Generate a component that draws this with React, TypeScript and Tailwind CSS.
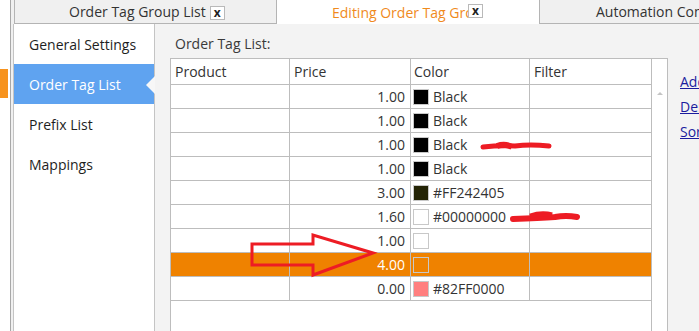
import React from "react";

type Row = { price: string; swatch: string; label: string; selected?: boolean };

const rows: Row[] = [
  { price: "1.00", swatch: "#000000", label: "Black" },
  { price: "1.00", swatch: "#000000", label: "Black" },
  { price: "1.00", swatch: "#000000", label: "Black" },
  { price: "1.00", swatch: "#000000", label: "Black" },
  { price: "3.00", swatch: "#242405", label: "#FF242405" },
  { price: "1.60", swatch: "#ffffff", label: "#00000000" },
  { price: "1.00", swatch: "#ffffff", label: "" },
  { price: "4.00", swatch: "transparent", label: "", selected: true },
  { price: "0.00", swatch: "#ff7f7f", label: "#82FF0000" },
];

const navItems = ["General Settings", "Order Tag List", "Prefix List", "Mappings"];

const CloseBox = ({ className = "" }: { className?: string }) => (
  <span
    className={`flex h-[14px] w-[15px] shrink-0 items-center justify-center border border-[#b9b9b9] bg-white pb-[1px] text-[12px] font-bold leading-none text-[#222] ${className}`}
  >
    x
  </span>
);

const Annotations = () => (
  <svg
    className="pointer-events-none absolute left-0 top-0"
    width="699"
    height="331"
    viewBox="0 0 699 331"
  >
    <path
      d="M483 147 Q500 145 515 146 Q530 144 549 146"
      stroke="#ed1c24"
      strokeWidth="5"
      strokeLinecap="round"
      fill="none"
    />
    <path d="M497 146 Q505 143 512 147" stroke="#ed1c24" strokeWidth="6" fill="none" />
    <path
      d="M513 219 Q540 218 555 217 Q566 215 577 217"
      stroke="#ed1c24"
      strokeWidth="6"
      strokeLinecap="round"
      fill="none"
    />
    <path d="M530 216 Q542 212 552 215" stroke="#ed1c24" strokeWidth="5" fill="none" />
    <path
      d="M252 244 L313 244 L313 235 L373 253 L313 275 L313 265 L252 265 Z"
      stroke="#ed1c24"
      strokeWidth="3"
      strokeLinejoin="miter"
      fill="none"
    />
  </svg>
);

const App = () => {
  return (
    <div
      className="relative flex h-[331px] w-[699px] overflow-hidden bg-white text-[14px] text-[#333]"
      style={{ fontFamily: '"Open Sans", "Noto Sans", sans-serif' }}
    >
      {/* far left strip */}
      <div className="flex w-[11px] shrink-0 flex-col border-r border-[#a8a8a8] bg-white">
        <div className="h-[69px]" />
        <div className="h-[29px] w-[8px] bg-[#f7931e]" />
      </div>

      <div className="flex min-w-0 flex-1 flex-col bg-[#f0f0f0]">
        {/* tabs */}
        <div className="flex h-[24px] shrink-0">
          <div className="w-[3px] shrink-0" />
          <div className="flex w-[263px] shrink-0 items-center border-x border-b border-[#b4b4b4] bg-[#f0f0f0] pl-[54px]">
            <span className="text-[#333]">Order Tag Group List</span>
            <CloseBox className="ml-[4px] mt-[3px]" />
          </div>
          <div className="flex w-[262px] shrink-0 items-start bg-white pl-[55px]">
            <span className="mt-[2px] w-[136px] overflow-hidden whitespace-nowrap text-[#f08a1c]">
              Editing Order Tag Group
            </span>
            <CloseBox className="mt-[4px]" />
          </div>
          <div className="flex min-w-0 flex-1 items-center overflow-hidden whitespace-nowrap border-b border-l border-[#b4b4b4] bg-[#f0f0f0] pl-[56px]">
            Automation Commands
          </div>
        </div>

        {/* body */}
        <div className="flex min-h-0 flex-1 pl-[2px]">
          <div className="flex w-[142px] shrink-0 flex-col border-x border-[#c4c4c4] bg-white">
            {navItems.map((item, i) => (
              <div
                key={item}
                className={`relative flex h-[40px] items-center pl-[15px] ${
                  i === 1 ? "bg-[#5fa3f0] text-white" : "text-[#1e1e1e]"
                }`}
              >
                {item}
                {i === 1 && (
                  <span className="absolute right-[-1px] top-[12px] h-0 w-0 border-y-[9px] border-r-[9px] border-y-transparent border-r-[#f7f7f7]" />
                )}
              </div>
            ))}
          </div>

          <div className="flex min-w-0 flex-1 flex-col bg-[#f3f3f3] pl-[15px] pt-[10px]">
            <div className="h-[20px] pl-[5px] leading-[20px] text-[#3a3a3a]">Order Tag List:</div>
            <div className="mt-[4px] flex min-h-0 flex-1">
              <div className="flex w-[498px] shrink-0 border-x border-t border-[#bdbdbd] bg-white">
                <div className="w-[480px] shrink-0">
                  <div className="grid h-[26px] grid-cols-[119px_121px_119px_121px] border-b border-[#bdbdbd]">
                    <div className="border-r border-[#bdbdbd] pl-[4px] leading-[25px]">Product</div>
                    <div className="border-r border-[#bdbdbd] pl-[4px] leading-[25px]">Price</div>
                    <div className="border-r border-[#bdbdbd] pl-[3px] leading-[25px]">Color</div>
                    <div className="pl-[4px] leading-[25px]">Filter</div>
                  </div>
                  {rows.map((r, i) => (
                    <div
                      key={i}
                      className={`grid h-[24px] grid-cols-[119px_121px_119px_121px] border-b border-[#bdbdbd] ${
                        r.selected ? "bg-[#ef8200] text-white" : ""
                      }`}
                    >
                      <div className="border-r border-[#bdbdbd]" />
                      <div className="border-r border-[#bdbdbd] pr-[5px] text-right leading-[23px]">
                        {r.price}
                      </div>
                      <div className="flex items-center gap-[4px] border-r border-[#bdbdbd] pl-[2px]">
                        <span
                          className="h-[16px] w-[16px] shrink-0 border border-[#c8c8c8]"
                          style={{ backgroundColor: r.swatch }}
                        />
                        <span className="leading-[23px]">{r.label}</span>
                      </div>
                      <div />
                    </div>
                  ))}
                </div>
                <div className="flex w-[16px] shrink-0 justify-center border-l border-[#bdbdbd] pt-[33px]">
                  <span className="h-0 w-0 border-x-[3px] border-b-[3px] border-x-transparent border-b-[#c4c4c4]" />
                </div>
              </div>
              <div className="flex flex-col gap-[4px] pl-[12px] pt-[13px] text-[#1b1b9e]">
                <span className="underline">Add</span>
                <span className="underline">Delete</span>
                <span className="underline">Sort</span>
              </div>
            </div>
          </div>
        </div>
      </div>
      <Annotations />
    </div>
  );
};

export default App;
